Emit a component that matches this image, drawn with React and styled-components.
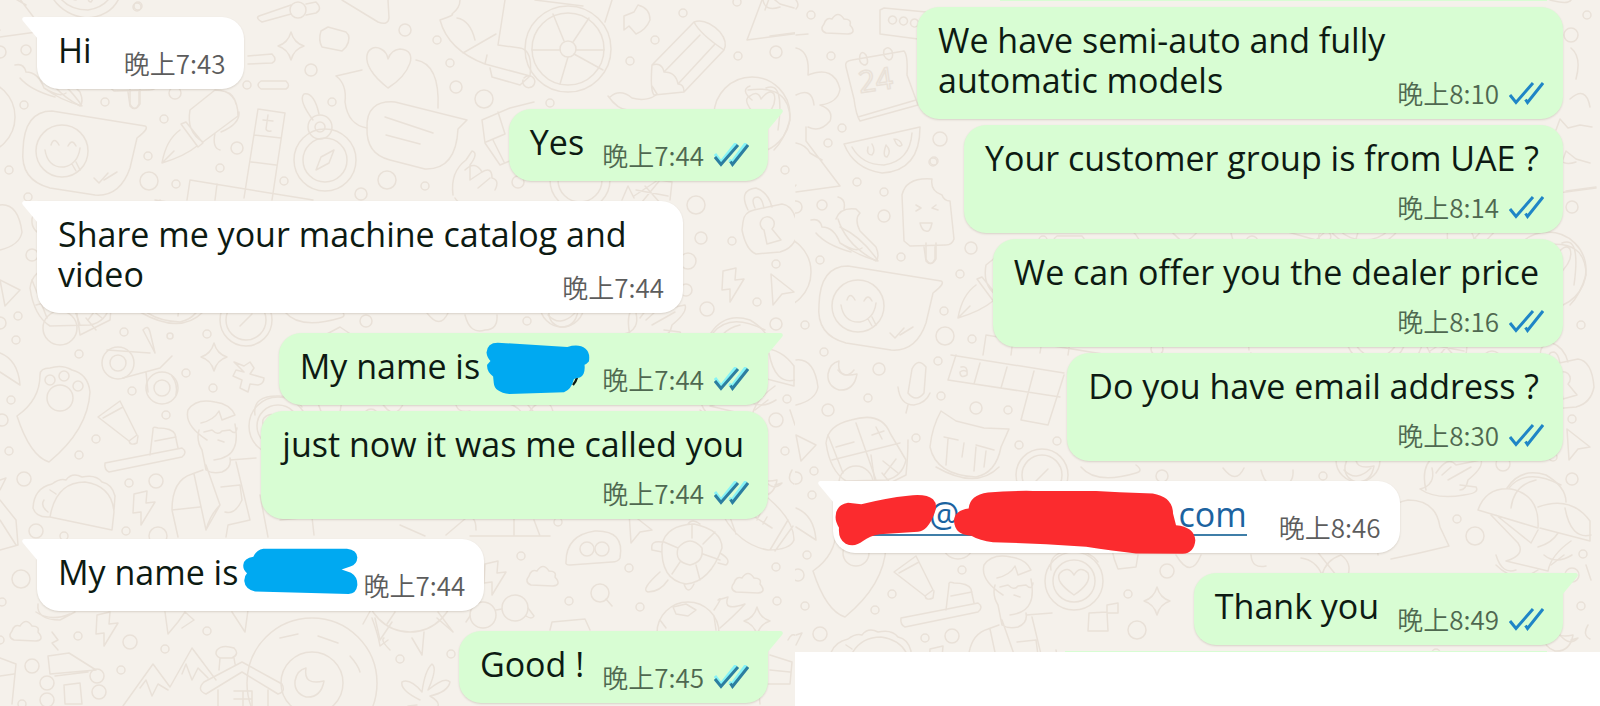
import React from 'react';
import styled, { createGlobalStyle } from 'styled-components';

const GlobalStyle = createGlobalStyle`
  body {
    margin: 0;
    background: #fff;
    font-family: "Open Sans", "Noto Sans CJK SC", sans-serif;
  }
`;

const Page = styled.main`
  display: grid;
  grid-template-columns: 795fr 805fr;
  align-items: start;
  min-height: 100vh;
`;

const Pane = styled.section`
  position: relative;
  box-sizing: border-box;
  min-width: 0;
  min-height: ${({ full }) => full ? '100vh' : '0'};
  padding: ${({ full }) => full ? '17px 27px 3px 37px' : '0 37px 0 38px'};
  background: #f5f1eb;
  overflow: hidden;
`;

const WallpaperSvg = styled.svg`
  position: absolute;
  top: 0;
  left: 0;
  width: 100%;
  height: 100%;
  fill: none;
  stroke: #e9e1d8;
  stroke-width: 1.5;
  stroke-linecap: round;
  stroke-linejoin: round;
`;

const Thread = styled.div`
  position: relative;
  display: flex;
  flex-direction: column;
`;

const Bubble = styled.article`
  position: relative;
  box-sizing: border-box;
  display: flex;
  flex-direction: ${({ layout }) => layout === 'inline' ? 'row' : 'column'};
  align-self: ${({ out }) => out ? 'flex-end' : 'flex-start'};
  max-width: 646px;
  margin-top: ${({ gap }) => gap}px;
  padding: 13px 19px 0 21px;
  border-radius: 22px;
  border-top-left-radius: ${({ tail, out }) => tail && !out ? 0 : 22}px;
  border-top-right-radius: ${({ tail, out }) => tail && out ? 0 : 22}px;
  background: ${({ out }) => out ? '#d8fdd3' : '#fff'};
  box-shadow: 0 1px 2px rgba(90, 70, 50, 0.18);
`;

const TailSvg = styled.svg`
  position: absolute;
  top: 0;
  left: ${({ out }) => out ? 'auto' : '-15px'};
  right: ${({ out }) => out ? '-15px' : 'auto'};
  width: 16px;
  height: 22px;
  transform: ${({ out }) => out ? 'scaleX(-1)' : 'none'};
  fill: ${({ out }) => out ? '#d8fdd3' : '#fff'};
`;

const Text = styled.p`
  margin: 0 ${({ layout }) => layout === 'below' ? 5 : 0}px 19px 0;
  color: #0d1a12;
  font-size: 34px;
  line-height: 40px;
`;

const Meta = styled.span`
  display: flex;
  align-items: flex-end;
  align-self: flex-end;
  gap: 10px;
  float: ${({ layout }) => layout === 'wrap' ? 'right' : 'none'};
  margin-top: ${({ layout }) => layout === 'wrap' ? 21 : -2}px;
  margin-left: ${({ out }) => out ? 18 : 32}px;
  margin-bottom: ${({ layout }) => layout === 'wrap' ? -5 : 14}px;
`;

const Time = styled.time`
  color: ${({ out }) => out ? '#4f6850' : '#5c5c5c'};
  font-family: "Noto Sans CJK SC", sans-serif;
  font-size: 26px;
  font-weight: 350;
  line-height: 24px;
  white-space: nowrap;
`;

const TicksSvg = styled.svg`
  width: 35px;
  height: 24px;
  fill: none;
  stroke-width: 3;
`;

const EmailLink = styled.a`
  display: inline-flex;
  margin-bottom: -2px;
  border-bottom: 2px solid #3f7ea8;
  color: #1c63a0;
  text-decoration: none;
  vertical-align: top;
`;

const Hidden = styled.span`
  position: relative;
  display: inline-block;
  width: ${({ width }) => width}px;
  height: 40px;
  vertical-align: top;
`;

const ScribbleSvg = styled.svg`
  position: absolute;
  z-index: 1;
  top: ${({ top }) => top}px;
  left: ${({ left }) => left}px;
`;

const Sliver = styled.div`
  align-self: flex-end;
  width: ${({ width }) => width};
  height: 1px;
  margin: ${({ last }) => last ? '6px 16px 0 0' : '0 16px 0 0'};
  background: #d8fdd3;
`;

const scribbles = {
  blueTall: {
    width: 105,
    height: 53,
    top: -4,
    left: 5,
    color: '#00a9f1',
    viewBox: '253 1026 314 160',
    d: 'M256 1058Q258 1028 290 1028L500 1041Q535 1030 555 1046Q570 1058 565 1085Q558 1093 552 1095Q555 1125 538 1133Q525 1135 520 1138Q512 1170 490 1178L325 1183Q280 1178 278 1150L276 1130Q256 1115 258 1095L268 1083Q258 1075 256 1058Z',
    rest: 'M529 1134Q526 1146 517 1156',
  },
  blueWide: {
    width: 115,
    height: 47,
    top: -4,
    left: 5,
    color: '#00a9f1',
    viewBox: '729 586 344 140',
    d: 'M790 588L1040 588Q1070 592 1071 614Q1070 635 1050 641L1024 650L1052 660Q1072 672 1071 697Q1068 722 1045 723L765 716Q735 708 733 685Q732 670 741 661Q728 650 730 636Q732 616 760 612Q768 592 790 588Z',
  },
  redSmall: {
    width: 102,
    height: 52,
    top: 0,
    left: -19,
    color: '#fb2b2e',
    viewBox: '166 424 306 156',
    d: 'M168 490Q170 455 205 450L245 455Q320 435 385 429Q440 422 460 440Q475 455 465 480Q445 535 415 537L300 545Q270 550 250 565Q225 585 198 573Q175 560 178 525Q166 505 168 490Z',
  },
  redLarge: {
    width: 243,
    height: 65,
    top: -4,
    left: -6,
    color: '#fb2b2e',
    viewBox: '520 410 730 194',
    d: 'M523 502Q525 470 567 465Q570 425 625 417Q690 411 760 412L950 412L1020 416L1120 420Q1180 430 1181 480L1190 515Q1245 520 1248 560Q1245 598 1210 601L1070 600Q1000 592 920 580L800 572L640 566Q600 562 575 547Q525 545 523 502Z',
  },
};

const Scribble = ({ name, space }) => {
  const { d, rest, color, ...box } = scribbles[name];
  return (
    <Hidden width={space}>
      <ScribbleSvg {...box} aria-hidden="true">
        {rest && <path d={rest} fill="none" stroke="#0d1a12" strokeWidth="7" />}
        <path d={d} fill={color} />
      </ScribbleSvg>
    </Hidden>
  );
};

const Ticks = ({ halo }) => (
  <TicksSvg viewBox="0 0 35 24" role="img" aria-label="Read">
    {halo && <path d="M1 11L7 19L22 0M15 17L18 19L32 0" stroke="#86f3f6" />}
    <path d="M1 14L7 21.500L24 2M16.500 18.500L18.500 21.500L34 2" stroke={halo ? '#2c7ea0' : '#1f85c6'} />
  </TicksSvg>
);

const dots = [
  [138, 6, 4], [26, 50, 5], [24, 105, 4], [0, 52, 6], [105, 102, 4], [164, 119, 4], [311, 70, 6], [148, 156, 4],
  [149, 181, 9], [176, 184, 4], [237, 148, 6], [220, 168, 4], [284, 181, 4], [332, 102, 4], [387, 180, 9],
  [361, 194, 6], [28, 197, 4], [9, 170, 4], [247, 85, 4], [175, 93, 6], [18, 316, 4], [0, 323, 6], [124, 332, 4],
  [170, 336, 3], [207, 334, 4], [366, 321, 6], [16, 340, 4], [32, 255, 6], [405, 30, 6], [437, 40, 4], [450, 63, 4],
  [456, 87, 6], [484, 99, 9], [630, 61, 4], [655, 40, 4], [683, 13, 4], [738, 56, 4], [776, 52, 6], [737, 2, 4],
  [550, 103, 4], [518, 182, 6], [425, 186, 4], [785, 170, 4], [696, 205, 9], [701, 238, 6], [732, 241, 4],
  [688, 261, 8], [776, 264, 4], [686, 290, 6], [707, 309, 7], [757, 302, 4], [776, 324, 6], [527, 321, 4],
  [83, 214, 6], [142, 206, 4], [145, 241, 4], [180, 253, 6], [212, 255, 4], [72, 243, 4], [120, 283, 4],
  [223, 290, 4], [261, 286, 4], [11, 400, 4], [2, 420, 6], [79, 354, 4], [186, 373, 4], [213, 388, 4], [132, 391, 4],
  [166, 415, 4], [96, 439, 4], [79, 455, 4], [9, 451, 4], [24, 479, 7], [129, 483, 4], [156, 481, 7], [36, 531, 7],
  [126, 531, 4], [64, 536, 4], [158, 536, 9], [21, 579, 9], [2, 602, 4], [78, 636, 4], [130, 642, 7], [207, 631, 4],
  [165, 649, 4], [32, 666, 7], [121, 670, 4], [0, 640, 4], [22, 704, 4], [558, 522, 4], [521, 556, 4], [629, 568, 4],
  [569, 601, 4], [640, 607, 4], [776, 567, 4], [777, 601, 4], [787, 399, 4], [776, 420, 7], [785, 451, 4],
  [451, 654, 4], [400, 659, 4], [679, 381, 9], [661, 364, 4], [341, 475, 9], [332, 439, 4], [371, 416, 7],
  [35, -99, 4], [46, -27, 4], [32, -12, 4], [144, -16, 7], [137, 7, 4], [61, 27, 4], [88, 37, 4], [15, -140, 4],
  [775, -120, 7], [791, -140, 4], [656, 480, 7], [640, 498, 4], [88, 61, 6],
];

const bolt = 'M-9 -13L4 -16L3 -4L12 -5L-2 18L-2 5L-10 6Z';
const star = 'M0 -14Q3 -3 13 0Q3 3 0 14Q-3 3 -13 0Q-3 -3 0 -14Z';
const cursor = 'M-9 -16L14 2L2 4L-7 15Z';
const cloud = 'M-12 8Q-19 5 -14 -1Q-12 -8 -6 -6Q0 -15 6 -6Q14 -6 12 0Q19 8 10 9Z';
const heart = 'M0 20C-34 -6 -20 -26 -7 -19Q-1 -16 0 -9Q3 -18 12 -19C32 -18 22 6 0 20Z';
const moon = 'M-3 -15Q-6 3 15 -2Q12 15 -3 14Q-15 10 -14 -2Q-12 -13 -3 -15Z';

const stamps = [
  [bolt, 732, 284], [bolt, 143, 507], [bolt, 106, 628], [bolt, 494, 577],
  [star, 291, 46], [star, 214, 357], [star, 757, 621], [star, 361, 446],
  [cursor, 780, 290], [cursor, 638, 528],
  [cloud, 543, 577], [cloud, 748, 584], [cloud, 26, 632], [cloud, 42, -130],
  [heart, 388, 68], [moon, 46, 221], [moon, 563, 313], [moon, 309, 683], [moon, 762, 482],
];

const rings = [
  [62, 151, 26], [-22, 117, 37], [325, 160, 31], [325, 160, 22], [320, 127, 12],
  [320, 127, 5], [298, 10, 8], [246, 320, 26], [246, 320, 20], [60, 328, 17], [568, 49, 43], [568, 49, 36],
  [568, 49, 8], [752, 115, 38], [580, 180, 30], [580, 180, 22], [118, 363, 16], [118, 363, 8], [162, 388, 16],
  [162, 388, 8], [60, 398, 13], [50, 380, 5], [64, 376, 5], [78, 386, 5], [278, 426, 29], [278, 426, 21],
  [587, 549, 7], [602, 549, 7], [600, 593, 9], [483, 615, 13], [515, 608, 13], [312, 683, 65], [312, 683, 31],
  [688, 633, 31], [47, 683, 7], [97, 676, 7], [47, 700, 7], [99, 692, 7], [562, 305, 22], [410, 588, 44],
];

const lines = [
  // speech bubbles
  'M23 150Q24 111 52 111L145 126Q150 128 137 138L130 168Q120 197 95 195L50 188Q20 180 23 150Z',
  'M45 150Q48 168 64 167Q78 164 80 148M51 145Q54 136 59 145M68 146Q72 138 76 146M72 164L76 171M76 162L80 170M94 178L99 183L108 173M104 180L117 172',
  'M362 70L336 76Q347 84 345 102Q348 125 367 128M416 60Q440 64 438 108',
  'M367 128Q366 100 395 102L467 120L458 129Q456 170 425 169L390 160Q366 154 367 128ZM385 117L433 133M386 135L420 144',
  'M582 400Q580 350 612 345Q640 345 644 372L653 391Q625 398 595 404',
  'M0 205Q18 203 22 232Q20 245 0 250M0 30Q-4 35 -8 36',
  // pens, tools and blocks
  'M190 110L215 90Q238 90 238 116L203 142Q186 132 190 110ZM181 124L186 122L203 143L198 147ZM180 130Q166 140 162 163Q185 156 197 146M163 162L174 151M226 92Q234 94 236 104M215 133Q212 148 220 150M239 112Q240 124 221 132',
  'M258 109L285 113L272 200M258 109L244 198M254 135L281 138M251 162L276 165M190 180L313 200M190 180L187 200M217 184L215 200M268 115L266 129Q267 132 271 131M263 120L273 121',
  'M248 56L272 54Q278 60 272 63L248 64M261 81L286 81Q291 86 286 89L261 89Q255 85 261 81Z',
  'M259 16L291 5M306 4L316 2Q323 9 316 13L306 15M291 14L262 22Q255 18 259 16',
  'M321 31L328 27L346 32Q352 37 346 47L342 51L322 47Q318 40 321 31Z',
  'M313 120Q298 100 304 94Q314 92 319 114M316 170L321 157L334 150L329 163Z',
  'M342 0L378 22Q388 26 389 18L388 0',
  'M15 65Q24 63 26 72Q38 72 44 88Q60 98 66 93M20 78Q30 90 55 97M44 72Q66 82 82 106Q60 100 44 88',
  'M130 88L130 104Q135 113 140 104L140 88',
  // scooter
  'M440 20Q448 50 485 64L487 55M440 20Q455 15 452 14Q460 8 460 0M485 64L530 76Q533 50 520 48L498 45L505 0M463 53L496 34M490 68L492 77L520 85L530 76M524 78A6 6 0 1 1 523 80M457 18Q470 20 475 40M535 0L583 6M605 22L612 0',
  'M532 50L560 50M576 50L604 50M564 41L553 14M573 42L589 18M574 54L603 70M568 57L560 84',
  'M624 16L634 12L638 5Q650 8 650 20Q646 30 636 34L629 26L624 30Z',
  // pencil
  'M652 65L694 22Q706 18 720 32Q728 42 724 50L684 92L654 95Q650 90 652 65ZM652 65Q662 62 664 72Q676 72 678 84Q684 84 684 92M664 72L700 35M678 84L715 44M694 22Q700 34 724 50M652 86L657 94',
  'M762 0L747 40L800 33M763 0Q765 12 780 7',
  'M760 120Q740 100 750 96Q758 90 761 99Q770 88 774 94Q778 106 762 120',
  'M610 97Q620 88 632 98Q646 102 656 95M608 96Q618 110 628 110',
  'M482 120L510 108L534 102M482 120L485 143L500 165L512 160M486 142L505 134L498 112M493 140L504 162',
  'M453 195Q450 172 466 160L472 151Q479 153 470 165L470 180M465 170Q475 160 482 172Q492 166 492 178Q500 180 495 190M470 180L482 172M478 188L490 178M455 198Q460 208 490 204',
  'M622 200L628 186L634 198M634 196L658 180L672 182L670 200M636 190L668 196M645 186L662 205M660 180L642 202',
  // padlock
  'M748 210Q738 190 756 188Q768 192 772 207M755 208Q750 197 758 197Q762 198 764 208M743 222Q744 212 754 210L782 204Q796 206 798 232Q795 248 780 252L756 254Q746 250 742 230ZM764 230A7 7 0 1 1 772 229L781 240L767 244Z',
  // beneath the second incoming message
  'M32 280L47 318M75 300L80 335L110 320Q112 300 112 285M86 318L96 330M140 312Q180 335 203 312M240 326L252 314M143 330L155 353M143 330Q148 324 150 332L155 353M285 312Q300 330 340 318Q348 316 340 310M325 335L340 327L352 335',
  'M0 280L20 290L5 306Z',
  'M155 200L268 218M152 225L264 242M160 200L152 225M184 208L178 229M211 212L205 233M238 216L225 265L252 270L268 220M165 212Q172 210 171 220Q164 224 164 217Q168 214 171 217',
  'M427 313Q440 330 448 313M465 315Q470 335 485 330Q498 330 497 315M548 315Q560 328 575 313M630 335Q624 310 640 300M640 318Q652 300 660 310L685 305Q688 312 672 325Q670 335 664 335',
  'M713 333Q730 312 765 330M752 100Q740 90 750 86',
  'M715 353Q718 330 740 325M42 215Q50 225 58 215',
  // calculator tile, microphone, cat
  'M30 288Q32 270 55 265Q85 256 94 278L110 305Q106 322 90 325L50 326Q34 316 30 288ZM60 268L80 325M36 305L104 288M40 292L58 287M76 280L88 276M80 272L86 284M87 306L102 318M100 304L88 320',
  'M112 238L116 214Q122 202 130 212L128 238Q120 248 112 238ZM102 232Q104 250 118 250Q130 248 134 238M112 250L110 258',
  'M145 256L160 266L188 273L213 274L205 292Q200 318 180 322Q140 320 134 292Q136 272 145 256ZM148 282L162 285M180 290L198 295M152 284L150 310M168 288L166 302M180 292L178 316M190 296L188 312',
  // paw, cassette, toothbrush, taco
  'M40 375Q40 368 50 368Q62 364 72 370Q88 374 90 392Q88 430 49 462Q30 456 17 416Q40 400 40 375Z',
  'M107 350L150 353M123 378L160 368L172 356M146 372L148 392M176 395Q178 384 172 376',
  'M98 417L120 401L137 435L129 441ZM103 418L123 407M129 441Q130 446 137 443L138 436',
  'M105 463L182 448Q188 452 182 457L109 472Q104 470 105 463ZM150 455L153 430Q152 426 158 428Q172 428 175 434L178 448M155 441L176 437',
  'M234 362L244 366L250 362L254 368L250 374L264 378Q264 384 258 385L250 384L248 392L240 388L242 380L233 376L236 370L244 372Z',
  'M50 517Q56 482 85 482Q112 486 114 512L112 530L50 517ZM33 508Q34 488 52 484Q60 478 66 480Q72 472 82 477Q96 474 102 482Q112 484 115 496L114 510M33 508Q36 518 50 517M44 500Q40 506 48 512M50 490L56 494',
  // person with glasses
  'M207 440Q184 425 188 410Q196 398 215 402Q230 404 235 415L222 420L219 411Q214 420 201 423M199 430Q196 440 202 450L206 470Q212 474 222 472Q232 468 230 458M235 424Q238 440 234 448Q230 458 214 460M204 432L212 430Q218 436 222 431L230 430Q236 436 237 428M218 440L224 442M203 470L192 474Q172 480 172 510L178 537M194 474L206 530L220 505L206 465M230 460L256 458M236 462L250 520L228 525L226 537M172 510L200 507M220 505Q210 515 206 530M221 487L240 485L242 500Q235 515 225 512M260 495L268 537M280 520L312 517L314 535M255 415Q252 395 280 396Q294 396 302 407',
  'M278 440Q258 426 264 418Q272 410 278 420Q284 410 292 418Q296 428 278 440Z',
  'M293 458L311 457L312 476L292 476ZM311 450L322 448L322 458L311 458Z',
  'M316 395Q318 405 322 414L340 412L342 400M455 400Q456 414 470 411M380 400Q395 425 405 400M520 395L540 420M700 400Q706 420 720 415',
  // mushrooms
  'M682 355Q690 332 715 334Q744 340 742 373L682 355ZM742 352Q775 340 794 366L794 386L744 373M711 333Q725 312 750 320Q770 332 770 347M695 360L722 388Q730 400 710 406L752 416Q755 400 775 386M700 360L735 388L742 375M742 392Q756 388 762 378',
  'M636 313Q640 330 624 334Q640 345 668 340Q684 338 680 332L664 330M646 320L655 312M652 325L675 312',
  'M505 403Q520 405 526 420Q530 405 545 400Q556 408 552 420',
  // turtle, football, dumpling
  'M662 545Q666 525 694 524Q722 530 722 548Q710 582 686 584Q660 580 662 545ZM678 548Q690 534 702 548Q704 562 690 565Q674 562 678 548ZM664 542L678 548M692 524L692 538M715 532L703 544M720 560L703 554M700 580L696 565M672 574L680 562M662 552L652 550Q650 540 662 542M660 572Q640 590 648 592Q660 592 668 580M684 584Q688 596 694 584M720 553Q732 560 726 565L718 563M688 524Q692 518 700 524',
  'M724 517Q740 545 768 550Q790 550 794 540Q794 520 768 498Q755 505 750 515M752 515L772 528M757 520L760 514M763 524L767 517M770 550L788 520M775 551L793 526M730 517L736 534',
  'M566 562Q566 535 595 531Q625 530 620 558Q618 562 612 562L570 565Q565 565 566 562Z',
  'M606 599L612 606M496 610L502 609M528 608L534 616Q532 620 526 616M470 616L466 622',
  'M446 535L466 518Q476 514 476 530M514 515L514 536M534 520L540 536M470 536L550 536M400 525L425 536',
  'M714 610Q724 595 718 600L728 597Q722 612 745 604Q735 615 720 628M673 607L686 604L696 610L688 616L676 614ZM660 620L666 628M714 616L716 630',
  'M550 630L552 622L585 619L590 630M452 575L452 590M374 604L363 624M387 624L395 612',
  'M412 638L422 655L424 632M437 618L453 632L438 612M375 618L380 640L392 622M165 612L168 634L178 622L185 612L194 620L182 628M232 612L245 632L248 610',
  // skyline at the bottom
  'M48 656L69 653L96 670L50 674L48 656M55 676L88 672M64 685L80 683L82 704L65 704ZM52 632L58 640L52 643L58 650',
  'M123 706L153 664L170 687L192 648L216 680M140 688L146 680L152 696L158 684L168 690M182 674L186 664L192 680L198 668L208 678',
  'M204 682L242 662L282 684Q286 692 278 694L242 672L206 694Q196 690 204 682ZM218 690L218 706M268 690L268 706M219 670L220 658M234 658L235 664M217 650Q222 644 234 648Q240 654 232 658L220 658Q214 655 217 650ZM234 691L252 691L252 706M243 691L243 706M234 699L252 699',
  'M280 638L298 634M318 636L338 643M350 656Q358 665 360 672M372 618Q378 634 380 646L388 640',
  'M420 700Q400 690 402 682Q410 678 422 692Q425 670 432 664Q438 668 428 690Q445 676 450 682Q448 692 430 696Q440 702 438 706M417 705L408 706',
  'M770 655L792 662L790 684L768 684M770 670L790 672M758 684L760 704M0 658L16 664L12 704M0 676L14 674',
  'M0 500L16 520L18 545L0 550M0 520L16 545M0 372L20 385Q18 360 0 353M0 480L6 478L0 490',
  'M36 612Q50 622 70 614M38 604Q36 620 60 620L75 612',
  'M769 353Q775 385 795 380M768 400L755 410M790 410L795 425M792 470Q786 480 794 484M390 650Q380 640 384 638M788 640Q792 632 796 636',
  'M748 400Q760 410 776 400M700 410Q720 430 742 415M775 485L782 483Q774 492 764 480',
  // upper band of the tiled drawing
  'M84 -145L88 -147L130 -143M84 -145L84 -121L122 -116M96 -131A4 4 0 1 1 97 -131M107 -130A4 4 0 1 1 108 -130M118 -128A4 4 0 1 1 119 -128',
  'M50 -88Q48 -94 56 -95L108 -104Q112 -100 111 -80L122 -50L64 -34Q60 -40 58 -56ZM62 -38L120 -55M64 -100Q66 -105 70 -100Q74 -90 68 -90Q62 -92 64 -100ZM88 -105Q92 -110 96 -104Q98 -96 93 -95Q86 -98 88 -105',
  'M48 -11L124 -28Q124 16 86 18Q58 14 48 -11ZM56 -8Q66 10 88 10Q114 6 116 -22M72 -8Q70 0 76 0Q80 -4 76 -11M90 -10Q86 2 91 2Q96 -4 90 -10M98 -16Q102 -6 106 -10Q104 -16 98 -16',
  'M108 86L106 40Q110 22 136 24Q134 36 146 40Q148 46 154 46L158 84Q156 90 150 90L114 91ZM120 50L125 53L120 56M140 50L136 53L142 55M124 68L136 68Q134 78 130 76Q126 76 124 68M128 92L130 106Q135 112 139 104L139 91',
  'M42 42Q50 44 48 54M40 64Q44 52 60 54L64 58Q58 64 64 76L80 92Q84 102 80 106Q50 90 42 64',
  'M0 -107Q14 -104 12 -80Q38 -90 44 -66Q42 -52 24 -50Q38 -45 34 -34Q24 -22 12 -28M0 -60Q16 -68 18 -50M10 -28L10 -14L44 31L0 37M0 -12Q10 -10 14 -2L26 5M0 -155Q4 -150 0 -146M0 -120L12 -121',
  'M775 -107Q786 -98 780 -76M774 -56Q790 -70 794 -48M760 -25L764 -36L772 -27L784 -30L796 -28M765 10L770 -4L780 4L794 8M770 36L800 32M754 -155Q772 -150 775 -155M766 88Q785 80 778 130M748 90Q790 84 790 120Q784 140 774 150',
];

const Wallpaper = ({ shift = 0 }) => (
  <WallpaperSvg aria-hidden="true">
    <g transform={`translate(${shift ? 1 : 0} ${shift})`}>
      {dots.map(([x, y, r]) => <circle key={`dot_${x}_${y}`} cx={x} cy={y} r={r} />)}
      {rings.map(([x, y, r]) => <circle key={`ring_${x}_${y}_${r}`} cx={x} cy={y} r={r} />)}
      {stamps.map(([d, x, y]) => <path key={`stamp_${x}_${y}`} d={d} transform={`translate(${x} ${y})`} />)}
      {lines.map((d, index) => <path key={`line_${index}`} d={d} />)}
      {shift > 0 && <text x="64" y="-62" fontSize="30" transform="rotate(-8 64 -62)">24</text>}
    </g>
  </WallpaperSvg>
);

const Tail = ({ out }) => (
  <TailSvg out={out} viewBox="0 0 16 22" aria-hidden="true">
    <path d="M16 0H2Q-1 1 1 4L16 22Z" />
  </TailSvg>
);

const Message = ({ out, tail, halo, gap = 20, layout = 'inline', time, children }) => {
  const meta = (
    <Meta out={out} layout={layout}>
      <Time out={out}>{`晚上${time}`}</Time>
      {out && <Ticks halo={halo} />}
    </Meta>
  );

  return (
    <Bubble out={out} tail={tail} gap={gap} layout={layout}>
      {tail && <Tail out={out} />}
      <Text layout={layout}>
        {children}
        {layout === 'wrap' && meta}
      </Text>
      {layout !== 'wrap' && meta}
    </Bubble>
  );
};

const App = () => (
  <>
    <GlobalStyle />
    <Page>
      <Pane full>
        <Wallpaper />
        <Thread>
          <Message tail gap={0} time="7:43">Hi</Message>
          <Message out tail halo time="7:44">Yes</Message>
          <Message tail layout="wrap" time="7:44">Share me your machine catalog and video</Message>
          <Message out tail halo time="7:44">
            My name is<Scribble name="blueTall" space={104} />
          </Message>
          <Message out halo gap={6} layout="below" time="7:44">just now it was me called you</Message>
          <Message tail time="7:44">
            My name is<Scribble name="blueWide" space={93} />
          </Message>
          <Message out tail halo time="7:45">Good !</Message>
        </Thread>
      </Pane>

      <Pane>
        <Wallpaper shift={155} />
        <Thread>
          <Sliver width="75%" />
          <Message out gap={6} layout="wrap" time="8:10">We have semi-auto and fully automatic models</Message>
          <Message out gap={6} layout="below" time="8:14">Your customer group is from UAE ?</Message>
          <Message out gap={6} layout="below" time="8:16">We can offer you the dealer price</Message>
          <Message out gap={6} layout="below" time="8:30">Do you have email address ?</Message>
          <Message tail time="8:46">
            <EmailLink href="mailto:">
              <Scribble name="redSmall" space={75} />
              @
              <Scribble name="redLarge" space={219} />
              com
            </EmailLink>
          </Message>
          <Message out tail time="8:49">Thank you</Message>
          <Sliver width="66%" last />
        </Thread>
      </Pane>
    </Page>
  </>
);

export default App;
